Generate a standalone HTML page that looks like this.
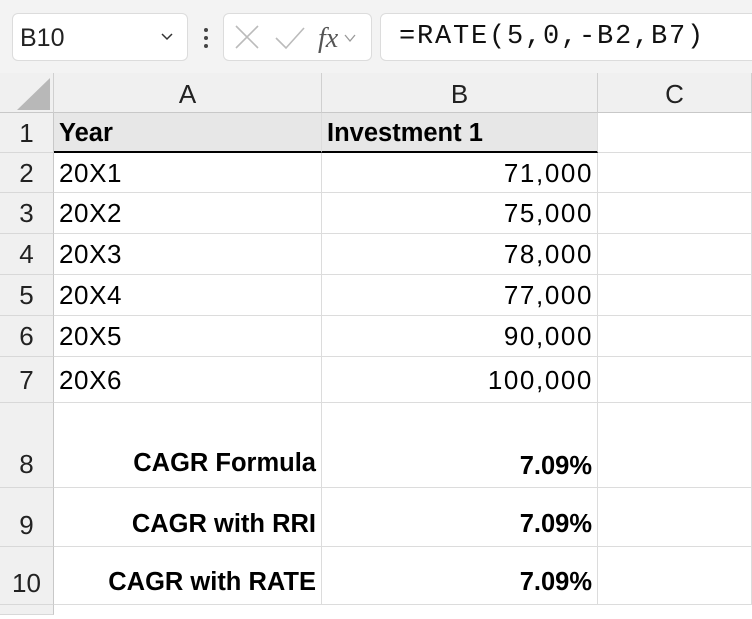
<!DOCTYPE html>
<html><head><style>
body{margin:0;width:752px;height:610px;overflow:hidden;background:#fff;font-family:"Liberation Sans",sans-serif;position:relative}
.tb{position:absolute;left:0;top:0;width:752px;height:73px;background:#f3f3f3}
.box{position:absolute;background:#fff;border:1px solid #dcdcdc;border-radius:6px;box-sizing:border-box}
.abs{position:absolute}
.hdr{position:absolute;top:73px;height:40px;background:#f0f0f0;border-right:1px solid #d0d0d0;border-bottom:1px solid #c8c8c8;box-sizing:border-box;text-align:center;line-height:42px;font-size:26px;color:#222}
.rh{position:absolute;left:0;width:54px;background:#f0f0f0;border-right:1px solid #c8c8c8;border-bottom:1px solid #d8d8d8;box-sizing:border-box;text-align:center;font-size:26px;color:#222}
.c{position:absolute;border-right:1px solid #dcdcdc;border-bottom:1px solid #dcdcdc;box-sizing:border-box;font-size:26px;letter-spacing:0.6px;color:#000;padding:0 5px;white-space:nowrap}
.r{text-align:right}
.n{letter-spacing:1.6px;padding-right:4px}
.b{font-weight:bold;font-size:25.5px;letter-spacing:0}
</style></head><body>
<div class="tb"></div>
<div class="box" style="left:12px;top:13px;width:176px;height:48px"></div>
<div class="abs" style="left:20px;top:24px;font-size:25px;color:#222">B10</div>
<svg class="abs" style="left:160px;top:32px" width="14" height="10"><path d="M2 2 L7 7 L12 2" stroke="#333" stroke-width="1.5" fill="none"/></svg>
<div class="abs" style="left:204px;top:28px;width:4px;height:4px;background:#444;border-radius:2px"></div>
<div class="abs" style="left:204px;top:36px;width:4px;height:4px;background:#444;border-radius:2px"></div>
<div class="abs" style="left:204px;top:44px;width:4px;height:4px;background:#444;border-radius:2px"></div>
<div class="box" style="left:223px;top:13px;width:149px;height:48px"></div>
<svg class="abs" style="left:232px;top:22px" width="140" height="32"><path d="M4 4 L26 26 M26 4 L4 26" stroke="#bbb" stroke-width="1.6"/><path d="M44 16 L54 26 L72 6" stroke="#bbb" stroke-width="1.6" fill="none"/><text x="86" y="25" font-family="Liberation Serif" font-style="italic" font-size="28" fill="#555">fx</text><path d="M113 13 L118 19 L123 13" stroke="#999" stroke-width="1.3" fill="none"/></svg>
<div class="box" style="left:380px;top:13px;width:380px;height:48px"></div>
<div class="abs" style="left:399px;top:22px;font-family:'Liberation Mono',monospace;font-size:27px;letter-spacing:1.8px;color:#111">=RATE(5,0,-B2,B7)</div>

<div class="hdr" style="left:0;width:54px;background:#f0f0f0"></div>
<svg class="abs" style="left:13px;top:77px" width="38" height="34"><path d="M37 1 L37 33 L4 33 Z" fill="#b8b8b8"/></svg>
<div class="hdr" style="left:54px;width:268px">A</div>
<div class="hdr" style="left:322px;width:276px">B</div>
<div class="hdr" style="left:598px;width:154px">C</div>

<div class="rh" style="top:113px;height:40px;line-height:40px">1</div>
<div class="rh" style="top:153px;height:40px;line-height:40px">2</div>
<div class="rh" style="top:193px;height:41px;line-height:41px">3</div>
<div class="rh" style="top:234px;height:41px;line-height:41px">4</div>
<div class="rh" style="top:275px;height:41px;line-height:41px">5</div>
<div class="rh" style="top:316px;height:41px;line-height:41px">6</div>
<div class="rh" style="top:357px;height:46px;line-height:46px">7</div>
<div class="rh" style="top:403px;height:85px;line-height:122px">8</div>
<div class="rh" style="top:488px;height:59px;line-height:74px">9</div>
<div class="rh" style="top:547px;height:58px;line-height:72px">10</div>
<div class="rh" style="top:605px;height:10px"></div>

<div class="c b" style="left:54px;top:113px;width:268px;height:40px;line-height:40px;background:#e7e7e7;border-bottom:2px solid #000">Year</div>
<div class="c b" style="left:322px;top:113px;width:276px;height:40px;line-height:40px;background:#e7e7e7;border-bottom:2px solid #000">Investment 1</div>
<div class="c" style="left:598px;top:113px;width:154px;height:40px"></div>

<div class="c" style="left:54px;top:153px;width:268px;height:40px;line-height:40px">20X1</div>
<div class="c r n" style="left:322px;top:153px;width:276px;height:40px;line-height:40px">71,000</div>
<div class="c" style="left:598px;top:153px;width:154px;height:40px"></div>
<div class="c" style="left:54px;top:193px;width:268px;height:41px;line-height:41px">20X2</div>
<div class="c r n" style="left:322px;top:193px;width:276px;height:41px;line-height:41px">75,000</div>
<div class="c" style="left:598px;top:193px;width:154px;height:41px"></div>
<div class="c" style="left:54px;top:234px;width:268px;height:41px;line-height:41px">20X3</div>
<div class="c r n" style="left:322px;top:234px;width:276px;height:41px;line-height:41px">78,000</div>
<div class="c" style="left:598px;top:234px;width:154px;height:41px"></div>
<div class="c" style="left:54px;top:275px;width:268px;height:41px;line-height:41px">20X4</div>
<div class="c r n" style="left:322px;top:275px;width:276px;height:41px;line-height:41px">77,000</div>
<div class="c" style="left:598px;top:275px;width:154px;height:41px"></div>
<div class="c" style="left:54px;top:316px;width:268px;height:41px;line-height:41px">20X5</div>
<div class="c r n" style="left:322px;top:316px;width:276px;height:41px;line-height:41px">90,000</div>
<div class="c" style="left:598px;top:316px;width:154px;height:41px"></div>
<div class="c" style="left:54px;top:357px;width:268px;height:46px;line-height:46px">20X6</div>
<div class="c r n" style="left:322px;top:357px;width:276px;height:46px;line-height:46px">100,000</div>
<div class="c" style="left:598px;top:357px;width:154px;height:46px"></div>

<div class="c r b" style="left:54px;top:403px;width:268px;height:85px;line-height:120px">CAGR Formula</div>
<div class="c r b" style="left:322px;top:403px;width:276px;height:85px;line-height:126px">7.09%</div>
<div class="c" style="left:598px;top:403px;width:154px;height:85px"></div>
<div class="c r b" style="left:54px;top:488px;width:268px;height:59px;line-height:72px">CAGR with RRI</div>
<div class="c r b" style="left:322px;top:488px;width:276px;height:59px;line-height:72px">7.09%</div>
<div class="c" style="left:598px;top:488px;width:154px;height:59px"></div>
<div class="c r b" style="left:54px;top:547px;width:268px;height:58px;line-height:70px">CAGR with RATE</div>
<div class="c r b" style="left:322px;top:547px;width:276px;height:58px;line-height:70px">7.09%</div>
<div class="c" style="left:598px;top:547px;width:154px;height:58px"></div>
</body></html>
